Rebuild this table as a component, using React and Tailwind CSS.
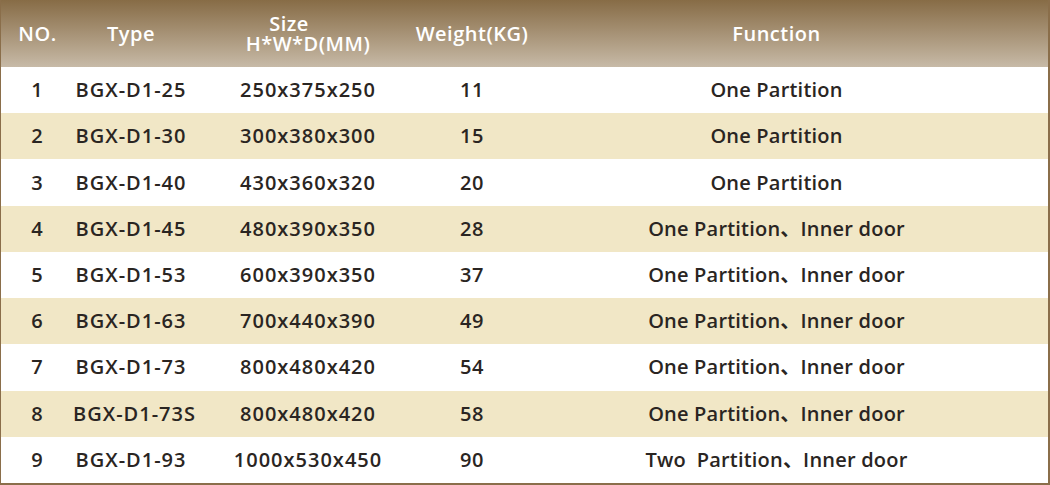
const rows = [
  ["1", "BGX-D1-25", "250x375x250", "11", "One Partition"],
  ["2", "BGX-D1-30", "300x380x300", "15", "One Partition"],
  ["3", "BGX-D1-40", "430x360x320", "20", "One Partition"],
  ["4", "BGX-D1-45", "480x390x350", "28", "One Partition、Inner door"],
  ["5", "BGX-D1-53", "600x390x350", "37", "One Partition、Inner door"],
  ["6", "BGX-D1-63", "700x440x390", "49", "One Partition、Inner door"],
  ["7", "BGX-D1-73", "800x480x420", "54", "One Partition、Inner door"],
  ["8", "BGX-D1-73S", "800x480x420", "58", "One Partition、Inner door"],
  ["9", "BGX-D1-93", "1000x530x450", "90", "Two  Partition、Inner door"],
];

const cols = "grid grid-cols-[72px_116px_238px_90px_1fr]";

export default function App() {
  return (
    <div
      className="w-[1050px] h-[485px] overflow-hidden bg-white"
      style={{ fontFamily: '"Open Sans", "Noto Sans CJK SC", sans-serif' }}
    >
      <div className="h-full flex flex-col border-l border-r-2 border-b-2 border-[#8a6e4a]">
        {/* header */}
        <div
          className={`${cols} h-[67px] shrink-0 items-center text-white font-semibold text-[20px] leading-none tracking-[0.5px] bg-gradient-to-b from-[#876c46] to-[#c7baa7]`}
        >
          <div className="text-center pl-[1px]">NO.</div>
          <div className="text-center">Type</div>
          <div className="flex flex-col items-center pt-[1px]">
            <span className="leading-[20px] pr-[38px]">Size</span>
            <span className="leading-[20px]">H*W*D(MM)</span>
          </div>
          <div className="flex justify-center whitespace-nowrap">Weight(KG)</div>
          <div className="text-center pr-[12px]">Function</div>
        </div>

        {/* body */}
        <div className="flex-1 flex flex-col text-[#2a2522] font-semibold text-[20px] leading-none">
          {rows.map((r, i) => (
            <div
              key={r[0]}
              className={`${cols} flex-1 items-center ${i % 2 === 1 ? "bg-[#f1e7c6]" : "bg-white"}`}
            >
              <div className="text-center">{r[0]}</div>
              <div className="text-center whitespace-nowrap tracking-[1px]">{r[1]}</div>
              <div className="text-center tracking-[1px]">{r[2]}</div>
              <div className="text-center tracking-[0.5px]">{r[3]}</div>
              <div className="text-center whitespace-pre tracking-[0.2px] pr-[12px]">{r[4]}</div>
            </div>
          ))}
        </div>
      </div>
    </div>
  );
}
